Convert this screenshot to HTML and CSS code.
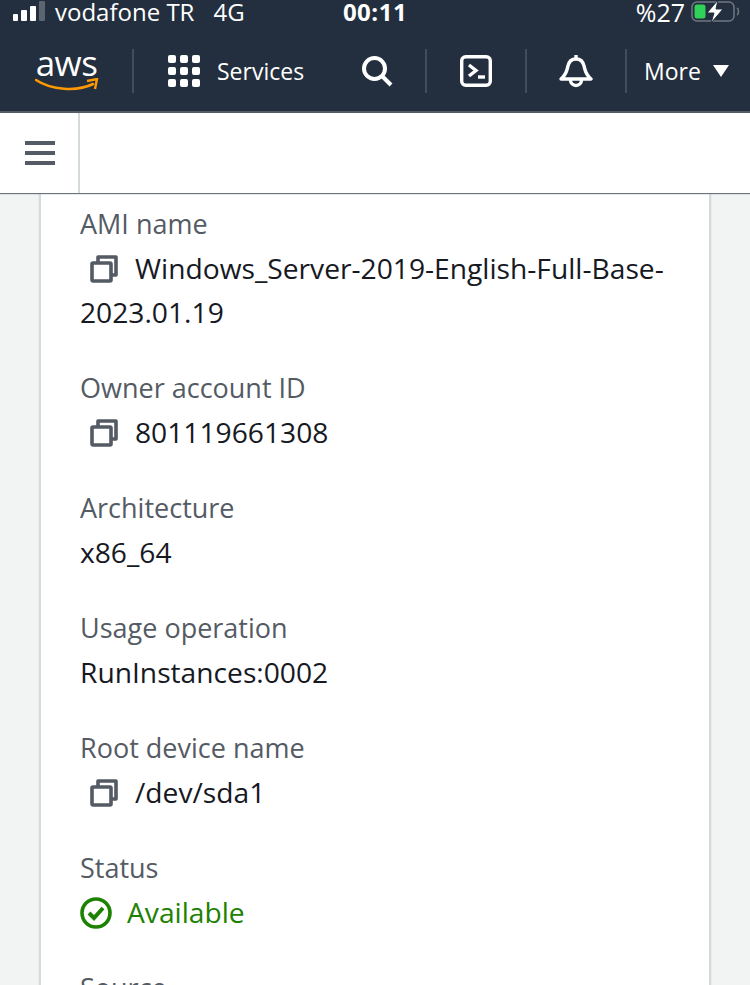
FILE: index.html
```html
<!DOCTYPE html>
<html lang="en">
<head>
  <meta charset="UTF-8">
  <title>AMI details</title>
  <link rel="stylesheet" href="styles.css">
</head>
<body>
  <div class="statusBar">
    <div class="statusLeft">
      <svg class="signal" width="34" height="22" viewBox="0 0 34 22">
        <rect x="1" y="13" width="5" height="7" rx="1" fill="#fff"/>
        <rect x="9" y="9" width="6" height="11" rx="1" fill="#fff"/>
        <rect x="18" y="5" width="6" height="15" rx="1" fill="#fff"/>
        <rect x="27" y="0" width="6" height="20" rx="1" fill="#5b6570"/>
      </svg>
      <span class="carrier">vodafone TR</span>
      <span class="network">4G</span>
    </div>
    <div class="clock">00:11</div>
    <div class="statusRight">
      <span class="percent">%27</span>
      <svg class="battery" width="50" height="24" viewBox="0 0 50 24">
        <rect x="1" y="2" width="42" height="19" rx="5" fill="none" stroke="#6f7780" stroke-width="1.500"/>
        <rect x="3.500" y="4.500" width="11" height="14" rx="2.500" fill="#30d158"/>
        <path d="M46 8c2 1 2 6 0 7" fill="none" stroke="#6f7780" stroke-width="1.500"/>
        <path d="M27 0 L16 13 H23 L20 23 L32 9 H25 Z" fill="#fff" stroke="#232f3e" stroke-width="1"/>
      </svg>
    </div>
  </div>

  <nav class="topNav">
    <div class="navCell logoCell">
      <div class="awsLogo">
        <span class="awsText">aws</span>
        <svg class="smile" width="64" height="16" viewBox="0 0 64 16">
          <path d="M1 2 C16 12 42 14 58 6" fill="none" stroke="#f90" stroke-width="2.600" stroke-linecap="round"/>
          <path d="M52 3 L62 1 L60 11" fill="none" stroke="#f90" stroke-width="2.400"/>
        </svg>
      </div>
    </div>
    <div class="navCell servicesCell">
      <svg width="32" height="32" viewBox="0 0 32 32" fill="#fff">
        <rect x="0" y="0" width="8" height="8" rx="2"/><rect x="12" y="0" width="8" height="8" rx="2"/><rect x="24" y="0" width="8" height="8" rx="2"/>
        <rect x="0" y="12" width="8" height="8" rx="2"/><rect x="12" y="12" width="8" height="8" rx="2"/><rect x="24" y="12" width="8" height="8" rx="2"/>
        <rect x="0" y="24" width="8" height="8" rx="2"/><rect x="12" y="24" width="8" height="8" rx="2"/><rect x="24" y="24" width="8" height="8" rx="2"/>
      </svg>
      <span class="navLabel">Services</span>
      <svg class="searchIcon" width="32" height="32" viewBox="0 0 32 32" fill="none" stroke="#fff" stroke-width="4">
        <circle cx="13.500" cy="13.500" r="10.500"/>
        <path d="M21 21 L30 30"/>
      </svg>
    </div>
    <div class="navCell iconCell">
      <svg width="32" height="32" viewBox="0 0 32 32" fill="none" stroke="#fff" stroke-width="3.400">
        <rect x="1.700" y="1.700" width="28.600" height="28.600" rx="4"/>
        <path d="M9 10 L16 15.500 L9 21"/>
        <path d="M18 22 H25"/>
      </svg>
    </div>
    <div class="navCell iconCell">
      <svg width="34" height="34" viewBox="0 0 34 34" fill="none" stroke="#fff" stroke-width="3.400">
        <path d="M2 25 C8 20 8 15 9 12 C10 7 13 5 17 5 C21 5 24 7 25 12 C26 15 26 20 32 25 Z" stroke-linejoin="round"/>
        <path d="M17 1 V5"/>
        <path d="M11.500 26 A5.500 5.500 0 0 0 22.500 26"/>
      </svg>
    </div>
    <div class="navCell moreCell">
      <span class="navLabel">More</span>
      <span class="caret"></span>
    </div>
  </nav>

  <div class="subBar">
    <div class="menuCell">
      <span class="burger"></span>
    </div>
  </div>

  <main class="content">
    <section class="card">
      <div class="field">
        <div class="fieldLabel">AMI name</div>
        <div class="fieldValue">
          <svg class="copyIcon" viewBox="0 0 28 28" width="28" height="28" fill="none" stroke="#545b64" stroke-width="3.600" stroke-linejoin="round"><path d="M8 7 V2 H26 V20 H21"/><rect x="2" y="8" width="19" height="18" rx="1"/></svg>Windows_Server-2019-English-Full-Base-2023.01.19
        </div>
      </div>
      <div class="field">
        <div class="fieldLabel">Owner account ID</div>
        <div class="fieldValue">
          <svg class="copyIcon" viewBox="0 0 28 28" width="28" height="28" fill="none" stroke="#545b64" stroke-width="3.600" stroke-linejoin="round"><path d="M8 7 V2 H26 V20 H21"/><rect x="2" y="8" width="19" height="18" rx="1"/></svg>801119661308
        </div>
      </div>
      <div class="field">
        <div class="fieldLabel">Architecture</div>
        <div class="fieldValue">x86_64</div>
      </div>
      <div class="field">
        <div class="fieldLabel">Usage operation</div>
        <div class="fieldValue">RunInstances:0002</div>
      </div>
      <div class="field">
        <div class="fieldLabel">Root device name</div>
        <div class="fieldValue">
          <svg class="copyIcon" viewBox="0 0 28 28" width="28" height="28" fill="none" stroke="#545b64" stroke-width="3.600" stroke-linejoin="round"><path d="M8 7 V2 H26 V20 H21"/><rect x="2" y="8" width="19" height="18" rx="1"/></svg>/dev/sda1
        </div>
      </div>
      <div class="field">
        <div class="fieldLabel">Status</div>
        <div class="fieldValue statusOk">
          <svg class="okIcon" viewBox="0 0 32 32" width="32" height="32" fill="none" stroke="#1d8102"><circle cx="16" cy="16" r="14" stroke-width="3.600"/><path d="M9 16 L14 21 L23 11" stroke-width="4"/></svg>Available
        </div>
      </div>
      <div class="field">
        <div class="fieldLabel">Source</div>
      </div>
    </section>
  </main>
</body>
</html>
```

FILE: styles.css
```css
html, body {
  margin: 0;
  height: 985px;
  overflow: hidden;
}

body {
  font-family: "Open Sans", "Noto Sans", sans-serif;
  background-color: #f2f3f3;
  color: #16191f;
}

.statusBar {
  background-color: #232f3e;
  color: white;
  height: 24px;
  line-height: 24px;
  display: grid;
  grid-template-columns: 1fr auto 1fr;
  align-items: center;
  padding: 0 12px 13px;
  font-size: 24px;
}

.statusLeft {
  display: flex;
  align-items: center;
}

.signal {
  margin-right: 9px;
}

.network {
  margin-left: 19px;
}

.clock {
  font-weight: 700;
  letter-spacing: 0.5px;
}

.statusRight {
  display: flex;
  justify-content: flex-end;
  align-items: center;
  gap: 6px;
}

.percent {
  font-size: 25px;
}

.battery {
  margin-right: -3px;
}

.topNav {
  background-color: #232f3e;
  height: 74px;
  border-bottom: 2px solid #545b64;
  display: flex;
  color: white;
}

.navCell {
  display: flex;
  align-items: center;
  height: 44px;
  margin-top: 12px;
  border-right: 2px solid #414d5c;
  box-sizing: border-box;
}

.logoCell {
  width: 134px;
  justify-content: center;
  padding-left: 1px;
}

.awsLogo {
  display: flex;
  flex-direction: column;
  align-items: center;
  width: 64px;
}

.awsText {
  font-size: 35px;
  line-height: 28px;
  letter-spacing: -0.5px;
}

.smile {
  margin-top: 1px;
}

.servicesCell {
  width: 293px;
  padding-left: 34px;
}

.navLabel {
  font-size: 23px;
  margin-left: 17px;
}

.searchIcon {
  margin-left: 57px;
}

.iconCell {
  width: 100px;
  justify-content: center;
}

.moreCell {
  border-right: none;
}

.caret {
  width: 0;
  height: 0;
  margin-left: 12px;
  border-left: 8px solid transparent;
  border-right: 8px solid transparent;
  border-top: 12px solid white;
}

.subBar {
  background-color: white;
  height: 80px;
  box-shadow: 0 1px 1px #6b7480;
  position: relative;
  z-index: 1;
}

.menuCell {
  width: 78px;
  height: 80px;
  border-right: 2px solid #d5dbdb;
  display: flex;
  align-items: center;
  justify-content: center;
}

.burger {
  width: 30px;
  height: 4px;
  margin-left: 2px;
  margin-top: -20px;
  background-color: #545b64;
  box-shadow: 0 10px 0 #545b64, 0 20px 0 #545b64;
}

.content {
  padding: 0 39px;
}

.card {
  background-color: white;
  border-left: 2px solid #d5dbdb;
  border-right: 2px solid #d5dbdb;
  padding: 9px 40px 0 39px;
  box-shadow: 0 1px 1px rgba(0, 28, 36, 0.2);
}

.field {
  margin-bottom: 32px;
}

.fieldLabel {
  color: #545b64;
  font-size: 27px;
  line-height: 44px;
}

.fieldValue {
  font-size: 28.2px;
  line-height: 44px;
}

.copyIcon {
  margin: 0 17px 0 10px;
  vertical-align: -4px;
}

.statusOk {
  color: #1d8102;
}

.okIcon {
  margin-right: 15px;
  vertical-align: -6px;
}
```
